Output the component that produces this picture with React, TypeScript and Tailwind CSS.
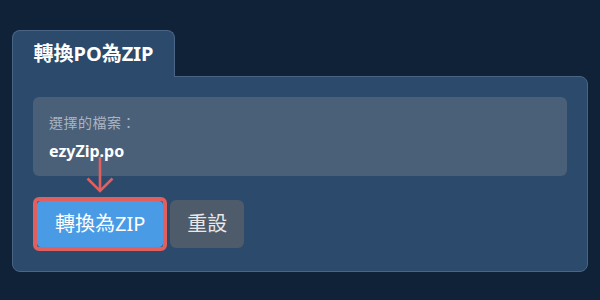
export default function App() {
  return (
    <div
      className="w-[600px] h-[300px] bg-[#0f2238] px-3 pt-[30px]"
      style={{ fontFamily: '"Noto Sans", "Noto Sans CJK TC", sans-serif' }}
    >
      <div className="flex">
        <div className="relative z-10 -mb-px w-[163px] h-[47px] flex items-center justify-center rounded-t-lg border border-b-0 border-[#4a6585] bg-[#2c4a6b] text-[20px] font-bold text-white">
          轉換PO為ZIP
        </div>
      </div>

      <div className="relative w-[576px] h-[196px] rounded-lg rounded-tl-none border border-[#4a6585] bg-[#2c4a6b] px-5 pt-5">
        <div className="rounded-md bg-[#4a5f78] px-4 pt-4 h-[79px]">
          <div className="text-[14px] leading-5 tracking-[0.5px] text-[#a9b5c3]">選擇的檔案：</div>
          <div className="mt-[6px] text-[16px] leading-6 font-bold text-white">ezyZip.po</div>
        </div>

        <div className="mt-[21px] flex items-center">
          <div className="rounded-md border-4 border-[#e05f5f]">
            <button className="h-[46px] px-[18px] rounded-sm bg-[#4a9be6] text-[20px] text-white">
              轉換為ZIP
            </button>
          </div>
          <button className="ml-[3px] h-[48px] px-[17px] rounded-md bg-[#4d5b6b] text-[20px] text-[#e8e8e8]">
            重設
          </button>
        </div>

        <svg
          className="absolute left-[73px] top-[79px]"
          width="28"
          height="37"
          viewBox="0 0 28 37"
          fill="none"
          stroke="#e05f5f"
          strokeWidth="2.6"
        >
          <path d="M14 1 V35" />
          <path d="M1.5 22.5 L14 35 L26.5 22.5" />
        </svg>
      </div>
    </div>
  );
}
